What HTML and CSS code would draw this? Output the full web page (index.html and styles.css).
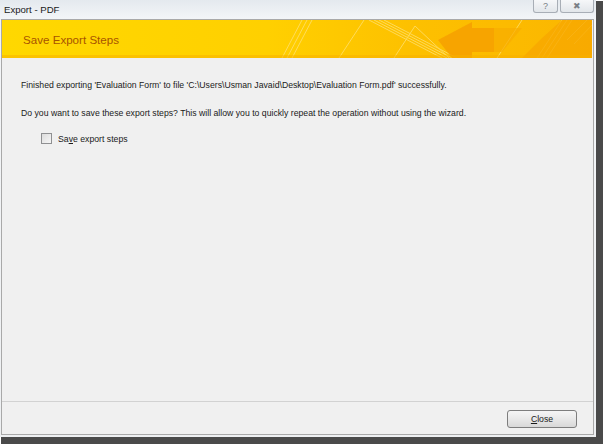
FILE: index.html
```
<!DOCTYPE html>
<html lang="en">
<head>
  <meta charset="UTF-8">
  <title>Export - PDF</title>
  <link rel="stylesheet" href="styles.css">
</head>
<body>
  <div class="window">
    <div class="title-bar">
      <span class="title-text">Export - PDF</span>
      <div class="title-buttons">
        <span class="tb-btn tb-help">?</span>
        <span class="tb-btn tb-close">&#x2716;</span>
      </div>
    </div>
    <div class="frame">
      <div class="banner">
        <svg class="banner-art" width="590" height="38" viewBox="0 0 590 38" preserveAspectRatio="none">
          <defs>
            <linearGradient id="bg" x1="0" y1="0" x2="1" y2="0">
              <stop offset="0" stop-color="#ffd800"/>
              <stop offset="0.45" stop-color="#ffd000"/>
              <stop offset="0.7" stop-color="#fdc000"/>
              <stop offset="1" stop-color="#fbb600"/>
            </linearGradient>
          </defs>
          <rect width="590" height="38" fill="url(#bg)"/>
          <!-- stripes -->
          <g stroke="#ffe070" stroke-width="1" opacity="0.8">
            <line x1="280" y1="38" x2="300" y2="0"/>
            <line x1="285" y1="38" x2="305" y2="0"/>
            <line x1="290" y1="38" x2="310" y2="0"/>
            <line x1="337" y1="38" x2="362" y2="0"/>
            <line x1="367" y1="0" x2="440" y2="38"/>
            <line x1="372" y1="0" x2="445" y2="38"/>
            <line x1="377" y1="0" x2="450" y2="38"/>
            <line x1="382" y1="0" x2="455" y2="38"/>
            <line x1="392" y1="38" x2="413" y2="6"/>
            <line x1="413" y1="6" x2="447" y2="38"/>
            <line x1="495" y1="38" x2="520" y2="0"/>
            <line x1="535" y1="38" x2="560" y2="0"/>
            <line x1="540" y1="38" x2="565" y2="0"/>
            <line x1="545" y1="38" x2="570" y2="0"/>
            <line x1="565" y1="20" x2="585" y2="0"/>
            <line x1="572" y1="24" x2="590" y2="5"/>
          </g>
          <!-- arrow -->
          <polygon points="436,20 470,2 470,8 492,8 492,32 470,32 470,38 450,38" fill="#f6a000" opacity="0.85"/>
          <polygon points="492,8 520,8 500,32 492,32" fill="#f8ac00" opacity="0.7"/>
          <!-- right wedge -->
          <polygon points="560,0 590,0 590,38 520,38 540,18" fill="#f7a800" opacity="0.8"/>
          <rect y="35" width="590" height="3" fill="#f7b000" opacity="0.5"/>
        </svg>
        <h1 class="banner-title">Save Export Steps</h1>
      </div>
      <div class="content">
        <p class="msg">Finished exporting 'Evaluation Form' to file 'C:\Users\Usman Javaid\Desktop\Evaluation Form.pdf' successfully.</p>
        <p class="msg msg-last">Do you want to save these export steps? This will allow you to quickly repeat the operation without using the wizard.</p>
        <label class="check-row">
          <span class="checkbox"></span>
          <span>Sa<u>v</u>e export steps</span>
        </label>
      </div>
      <div class="footer">
        <button class="close-btn"><u>C</u>lose</button>
      </div>
    </div>
  </div>
</body>
</html>
```

FILE: styles.css
```
html, body {
  margin: 0;
  padding: 0;
}
body {
  width: 604px;
  height: 445px;
  overflow: hidden;
  background: #ffffff;
  font-family: "Liberation Sans", Arial, sans-serif;
}
.window {
  width: 596px;
  height: 437px;
  box-sizing: border-box;
  padding: 0 2px 2px 1px;
  background: linear-gradient(#e4e9ee, #f4f6f8 20px, #eef0f2);
  box-shadow: 4px 4px 0 3px #4a4a4a;
  display: flex;
  flex-direction: column;
}
.title-bar {
  height: 19px;
  display: flex;
  align-items: flex-start;
  justify-content: space-between;
}
.title-text {
  font-size: 9.6px;
  color: #1a1a1a;
  margin: 4px 0 0 3px;
}
.title-buttons {
  display: flex;
  gap: 2px;
}
.tb-btn {
  height: 12px;
  border: 1px solid #a8aeb6;
  border-top: none;
  border-radius: 0 0 3px 3px;
  background: linear-gradient(#f6f7f9, #e2e6ea);
  color: #7a7f86;
  font-size: 9px;
  line-height: 12px;
  text-align: center;
}
.tb-help {
  width: 23px;
}
.tb-close {
  width: 32px;
}
.frame {
  flex: 1;
  display: flex;
  flex-direction: column;
  border: 1px solid #a9a9a9;
  background: #f0f0f0;
}
.banner {
  position: relative;
  height: 38px;
  display: flex;
  align-items: center;
}
.banner-art {
  position: absolute;
  left: 0;
  top: 0;
}
.banner-title {
  position: relative;
  margin: 1px 0 0 21px;
  font-size: 11.6px;
  font-weight: normal;
  color: #a85400;
}
.content {
  flex: 1;
  padding: 22px 0 0 19px;
  font-size: 8.7px;
  color: #1a1a1a;
}
.msg {
  margin: 0 0 18px 0;
}
.msg-last {
  margin-bottom: 15px;
}
.check-row {
  display: flex;
  align-items: center;
  gap: 6px;
  margin: 0 0 0 20px;
}
.checkbox {
  width: 9px;
  height: 9px;
  border: 1px solid #8f9092;
  background: linear-gradient(135deg, #dcdcdc, #f6f6f6);
}
.footer {
  height: 32px;
  border-top: 1px solid #d2d2d2;
  display: flex;
  align-items: center;
  justify-content: flex-end;
  padding-right: 16px;
}
.close-btn {
  width: 70px;
  height: 18px;
  margin-top: 1px;
  border: 1px solid #7d7d7d;
  border-radius: 3px;
  background: linear-gradient(#f5f5f5, #e8e8e8 50%, #d8d8d8);
  font-family: "Liberation Sans", Arial, sans-serif;
  font-size: 8.7px;
  color: #1a1a1a;
  padding: 0;
}
```
